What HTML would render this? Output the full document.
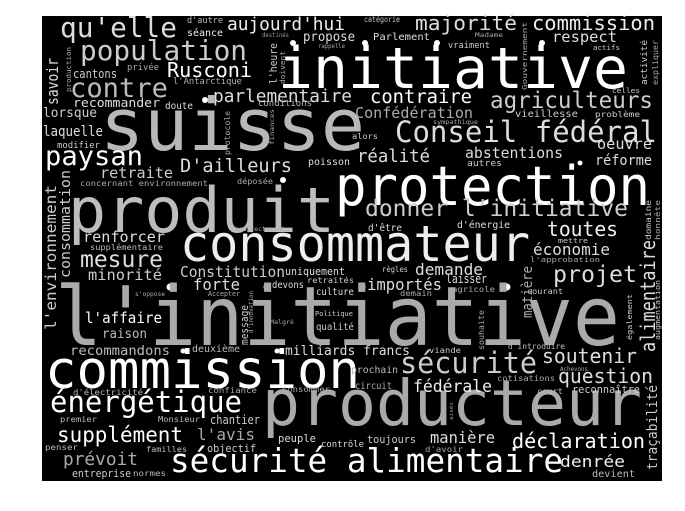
<!DOCTYPE html>
<html><head><meta charset="utf-8"><style>
html,body{margin:0;padding:0;background:#fff;width:685px;height:511px;overflow:hidden}
svg{display:block}
text{font-family:"DejaVu Sans Mono","Liberation Mono",monospace}
</style></head><body>
<svg width="685" height="511" viewBox="0 0 685 511" xmlns="http://www.w3.org/2000/svg">
<rect x="42" y="16" width="620" height="465" fill="#000"/>
<g fill="#fff">
<circle cx="293" cy="43" r="3"/><circle cx="205" cy="100" r="3"/><circle cx="283" cy="180" r="3"/>
<circle cx="365" cy="43" r="3"/><circle cx="437" cy="43" r="3"/><circle cx="542" cy="43" r="3"/>
<circle cx="580" cy="163" r="2.5"/><circle cx="170" cy="287" r="3.5"/><circle cx="267" cy="287" r="3.5"/>
<circle cx="183" cy="351" r="2.5"/><circle cx="277" cy="351" r="2.5"/><circle cx="362" cy="287" r="3.5"/><circle cx="507" cy="287" r="3.5"/>
</g>
<g>
<text x="55" y="345" font-size="82" fill="#aaa" textLength="565" lengthAdjust="spacingAndGlyphs">l'initiative</text>
<text x="68" y="232" font-size="62" fill="#bdbdbd" textLength="267" lengthAdjust="spacingAndGlyphs">produit</text>
<text x="100" y="150" font-size="72" fill="#b8b8b8" textLength="265" lengthAdjust="spacingAndGlyphs">suisse</text>
<text x="278" y="88" font-size="57" fill="#fff" textLength="350" lengthAdjust="spacingAndGlyphs">initiative</text>
<text x="335" y="205" font-size="54" fill="#fff" textLength="315" lengthAdjust="spacingAndGlyphs">protection</text>
<text x="180" y="261" font-size="50" fill="#eee" textLength="350" lengthAdjust="spacingAndGlyphs">consommateur</text>
<text x="45" y="388" font-size="53" fill="#fff" textLength="315" lengthAdjust="spacingAndGlyphs">commission</text>
<text x="262" y="425" font-size="63" fill="#aaa" textLength="380" lengthAdjust="spacingAndGlyphs">producteur</text>
<text x="170" y="472" font-size="33" fill="#fff" textLength="393" lengthAdjust="spacingAndGlyphs">sécurité alimentaire</text>
<text x="60" y="37" font-size="28" fill="#ddd" textLength="117" lengthAdjust="spacingAndGlyphs">qu'elle</text>
<text x="187" y="23" font-size="9" fill="#bbb" textLength="36" lengthAdjust="spacingAndGlyphs">d'autre</text>
<text x="187" y="36" font-size="10" fill="#eee" textLength="36" lengthAdjust="spacingAndGlyphs">séance</text>
<text x="227" y="30" font-size="18" fill="#eee" textLength="118" lengthAdjust="spacingAndGlyphs">aujourd'hui</text>
<text x="262" y="37" font-size="6" fill="#999" textLength="27" lengthAdjust="spacingAndGlyphs">destinés</text>
<text x="303" y="41" font-size="13" fill="#ddd" textLength="52" lengthAdjust="spacingAndGlyphs">propose</text>
<text x="318" y="48" font-size="6" fill="#aaa" textLength="27" lengthAdjust="spacingAndGlyphs">rappelle</text>
<text x="80" y="60" font-size="28" fill="#ccc" textLength="167" lengthAdjust="spacingAndGlyphs">population</text>
<text x="127" y="70" font-size="9" fill="#aaa" textLength="32" lengthAdjust="spacingAndGlyphs">privée</text>
<text x="73" y="78" font-size="12" fill="#ccc" textLength="44" lengthAdjust="spacingAndGlyphs">cantons</text>
<text x="167" y="77" font-size="20" fill="#fff" textLength="85" lengthAdjust="spacingAndGlyphs">Rusconi</text>
<text x="173" y="84" font-size="9" fill="#aaa" textLength="69" lengthAdjust="spacingAndGlyphs">l'Antarctique</text>
<text x="70" y="97" font-size="27" fill="#bbb" textLength="98" lengthAdjust="spacingAndGlyphs">contre</text>
<text x="213" y="102" font-size="18" fill="#ddd" textLength="139" lengthAdjust="spacingAndGlyphs">parlementaire</text>
<text x="73" y="107" font-size="12" fill="#ddd" textLength="87" lengthAdjust="spacingAndGlyphs">recommander</text>
<text x="165" y="109" font-size="10" fill="#ddd" textLength="28" lengthAdjust="spacingAndGlyphs">doute</text>
<text x="258" y="106" font-size="9" fill="#bbb" textLength="54" lengthAdjust="spacingAndGlyphs">conditions</text>
<text x="43" y="117" font-size="13" fill="#ccc" textLength="54" lengthAdjust="spacingAndGlyphs">lorsque</text>
<text x="43" y="136" font-size="14" fill="#ddd" textLength="60" lengthAdjust="spacingAndGlyphs">laquelle</text>
<text x="57" y="148" font-size="9" fill="#ccc" textLength="43" lengthAdjust="spacingAndGlyphs">modifier</text>
<text x="45" y="165" font-size="27" fill="#fff" textLength="98" lengthAdjust="spacingAndGlyphs">paysan</text>
<text x="180" y="172" font-size="19" fill="#ddd" textLength="112" lengthAdjust="spacingAndGlyphs">D'ailleurs</text>
<text x="308" y="165" font-size="10" fill="#ddd" textLength="42" lengthAdjust="spacingAndGlyphs">poisson</text>
<text x="100" y="178" font-size="15" fill="#ccc" textLength="73" lengthAdjust="spacingAndGlyphs">retraite</text>
<text x="80" y="186" font-size="8" fill="#aaa" textLength="128" lengthAdjust="spacingAndGlyphs">concernant environnement</text>
<text x="237" y="184" font-size="8" fill="#aaa" textLength="36" lengthAdjust="spacingAndGlyphs">déposée</text>
<text x="83" y="242" font-size="15" fill="#ddd" textLength="82" lengthAdjust="spacingAndGlyphs">renforcer</text>
<text x="90" y="250" font-size="8" fill="#bbb" textLength="73" lengthAdjust="spacingAndGlyphs">supplémentaire</text>
<text x="235" y="231" font-size="6" fill="#aaa" textLength="50" lengthAdjust="spacingAndGlyphs">indirectement</text>
<text transform="translate(58,105) rotate(-90)" font-size="16" fill="#ddd" textLength="47" lengthAdjust="spacingAndGlyphs">savoir</text>
<text transform="translate(71,92) rotate(-90)" font-size="7" fill="#aaa" textLength="45" lengthAdjust="spacingAndGlyphs">production</text>
<text transform="translate(56,330) rotate(-90)" font-size="15" fill="#ccc" textLength="145" lengthAdjust="spacingAndGlyphs">l'environnement</text>
<text transform="translate(70,278) rotate(-90)" font-size="14" fill="#ccc" textLength="108" lengthAdjust="spacingAndGlyphs">consommation</text>
<text transform="translate(277,84) rotate(-90)" font-size="11" fill="#ccc" textLength="41" lengthAdjust="spacingAndGlyphs">l'heure</text>
<text transform="translate(285,84) rotate(-90)" font-size="7" fill="#aaa" textLength="33" lengthAdjust="spacingAndGlyphs">doivent</text>
<text transform="translate(230,155) rotate(-90)" font-size="8" fill="#aaa" textLength="44" lengthAdjust="spacingAndGlyphs">protocole</text>
<text transform="translate(274,145) rotate(-90)" font-size="6" fill="#aaa" textLength="36" lengthAdjust="spacingAndGlyphs">finances</text>
<text transform="translate(248,345) rotate(-90)" font-size="11" fill="#ccc" textLength="40" lengthAdjust="spacingAndGlyphs">message</text>
<text transform="translate(253,333) rotate(-90)" font-size="6" fill="#aaa" textLength="42" lengthAdjust="spacingAndGlyphs">d'innovation</text>
<text x="80" y="267" font-size="23" fill="#ddd" textLength="83" lengthAdjust="spacingAndGlyphs">mesure</text>
<text x="88" y="280" font-size="15" fill="#ccc" textLength="74" lengthAdjust="spacingAndGlyphs">minorité</text>
<text x="180" y="277" font-size="15" fill="#ccc" textLength="105" lengthAdjust="spacingAndGlyphs">Constitution</text>
<text x="285" y="275" font-size="11" fill="#ddd" textLength="60" lengthAdjust="spacingAndGlyphs">uniquement</text>
<text x="193" y="290" font-size="16" fill="#ddd" textLength="47" lengthAdjust="spacingAndGlyphs">forte</text>
<text x="272" y="288" font-size="10" fill="#ddd" textLength="32" lengthAdjust="spacingAndGlyphs">devons</text>
<text x="307" y="283" font-size="8" fill="#ccc" textLength="47" lengthAdjust="spacingAndGlyphs">retraités</text>
<text x="316" y="295" font-size="10" fill="#ddd" textLength="38" lengthAdjust="spacingAndGlyphs">culture</text>
<text x="135" y="296" font-size="6" fill="#aaa" textLength="30" lengthAdjust="spacingAndGlyphs">s'oppose</text>
<text x="208" y="296" font-size="7" fill="#aaa" textLength="32" lengthAdjust="spacingAndGlyphs">Accepter</text>
<text x="85" y="323" font-size="15" fill="#fff" textLength="77" lengthAdjust="spacingAndGlyphs">l'affaire</text>
<text x="270" y="324" font-size="6" fill="#aaa" textLength="24" lengthAdjust="spacingAndGlyphs">Malgré</text>
<text x="315" y="316" font-size="7" fill="#ccc" textLength="38" lengthAdjust="spacingAndGlyphs">Politique</text>
<text x="316" y="330" font-size="10" fill="#ccc" textLength="38" lengthAdjust="spacingAndGlyphs">qualité</text>
<text x="102" y="338" font-size="13" fill="#bbb" textLength="45" lengthAdjust="spacingAndGlyphs">raison</text>
<text x="70" y="355" font-size="13" fill="#bbb" textLength="100" lengthAdjust="spacingAndGlyphs">recommandons</text>
<text x="192" y="352" font-size="10" fill="#bbb" textLength="48" lengthAdjust="spacingAndGlyphs">deuxième</text>
<text x="285" y="355" font-size="13" fill="#ddd" textLength="125" lengthAdjust="spacingAndGlyphs">milliards francs</text>
<text x="73" y="395" font-size="8" fill="#bbb" textLength="70" lengthAdjust="spacingAndGlyphs">d'électricité</text>
<text x="208" y="393" font-size="8" fill="#aaa" textLength="49" lengthAdjust="spacingAndGlyphs">confiance</text>
<text x="282" y="392" font-size="8" fill="#aaa" textLength="48" lengthAdjust="spacingAndGlyphs">consommer</text>
<text x="50" y="412" font-size="29" fill="#fff" textLength="192" lengthAdjust="spacingAndGlyphs">énergétique</text>
<text x="60" y="422" font-size="8" fill="#bbb" textLength="37" lengthAdjust="spacingAndGlyphs">premier</text>
<text x="158" y="422" font-size="8" fill="#bbb" textLength="42" lengthAdjust="spacingAndGlyphs">Monsieur</text>
<text x="210" y="424" font-size="12" fill="#ccc" textLength="50" lengthAdjust="spacingAndGlyphs">chantier</text>
<text x="57" y="442" font-size="21" fill="#fff" textLength="126" lengthAdjust="spacingAndGlyphs">supplément</text>
<text x="197" y="440" font-size="16" fill="#aaa" textLength="58" lengthAdjust="spacingAndGlyphs">l'avis</text>
<text x="45" y="450" font-size="8" fill="#bbb" textLength="33" lengthAdjust="spacingAndGlyphs">penser</text>
<text x="146" y="452" font-size="8" fill="#bbb" textLength="41" lengthAdjust="spacingAndGlyphs">familles</text>
<text x="207" y="452" font-size="11" fill="#ccc" textLength="49" lengthAdjust="spacingAndGlyphs">objectif</text>
<text x="278" y="442" font-size="11" fill="#ddd" textLength="38" lengthAdjust="spacingAndGlyphs">peuple</text>
<text x="321" y="447" font-size="9" fill="#ddd" textLength="43" lengthAdjust="spacingAndGlyphs">contrôle</text>
<text x="63" y="465" font-size="18" fill="#aaa" textLength="75" lengthAdjust="spacingAndGlyphs">prévoit</text>
<text x="72" y="477" font-size="11" fill="#ccc" textLength="59" lengthAdjust="spacingAndGlyphs">entreprise</text>
<text x="133" y="476" font-size="8" fill="#bbb" textLength="33" lengthAdjust="spacingAndGlyphs">normes</text>
<text x="364" y="22" font-size="8" fill="#ccc" textLength="36" lengthAdjust="spacingAndGlyphs">catégorie</text>
<text x="415" y="30" font-size="20" fill="#ddd" textLength="102" lengthAdjust="spacingAndGlyphs">majorité</text>
<text x="532" y="30" font-size="20" fill="#eee" textLength="123" lengthAdjust="spacingAndGlyphs">commission</text>
<text x="373" y="40" font-size="10" fill="#ddd" textLength="57" lengthAdjust="spacingAndGlyphs">Parlement</text>
<text x="475" y="37" font-size="6" fill="#aaa" textLength="28" lengthAdjust="spacingAndGlyphs">Madame</text>
<text x="552" y="42" font-size="15" fill="#ddd" textLength="65" lengthAdjust="spacingAndGlyphs">respect</text>
<text x="448" y="48" font-size="9" fill="#ccc" textLength="42" lengthAdjust="spacingAndGlyphs">vraiment</text>
<text x="593" y="50" font-size="7" fill="#ccc" textLength="27" lengthAdjust="spacingAndGlyphs">actifs</text>
<text transform="translate(527,90) rotate(-90)" font-size="7" fill="#aaa" textLength="68" lengthAdjust="spacingAndGlyphs">Gouvernement</text>
<text transform="translate(647,85) rotate(-90)" font-size="9" fill="#ccc" textLength="45" lengthAdjust="spacingAndGlyphs">activité</text>
<text transform="translate(658,85) rotate(-90)" font-size="8" fill="#aaa" textLength="45" lengthAdjust="spacingAndGlyphs">expliquer</text>
<text x="370" y="103" font-size="19" fill="#fff" textLength="102" lengthAdjust="spacingAndGlyphs">contraire</text>
<text x="490" y="108" font-size="23" fill="#ccc" textLength="163" lengthAdjust="spacingAndGlyphs">agriculteurs</text>
<text x="355" y="118" font-size="15" fill="#aaa" textLength="118" lengthAdjust="spacingAndGlyphs">Confédération</text>
<text x="515" y="117" font-size="10" fill="#ccc" textLength="63" lengthAdjust="spacingAndGlyphs">vieillesse</text>
<text x="595" y="117" font-size="8" fill="#ccc" textLength="45" lengthAdjust="spacingAndGlyphs">problème</text>
<text x="612" y="93" font-size="7" fill="#ccc" textLength="28" lengthAdjust="spacingAndGlyphs">celles</text>
<text x="433" y="124" font-size="6" fill="#aaa" textLength="45" lengthAdjust="spacingAndGlyphs">sympathique</text>
<text x="395" y="142" font-size="29" fill="#ddd" textLength="262" lengthAdjust="spacingAndGlyphs">Conseil fédéral</text>
<text x="352" y="139" font-size="8" fill="#ccc" textLength="26" lengthAdjust="spacingAndGlyphs">alors</text>
<text x="357" y="162" font-size="18" fill="#ddd" textLength="73" lengthAdjust="spacingAndGlyphs">réalité</text>
<text x="465" y="158" font-size="15" fill="#ddd" textLength="98" lengthAdjust="spacingAndGlyphs">abstentions</text>
<text x="597" y="149" font-size="15" fill="#ddd" textLength="55" lengthAdjust="spacingAndGlyphs">oeuvre</text>
<text x="595" y="165" font-size="14" fill="#ddd" textLength="57" lengthAdjust="spacingAndGlyphs">réforme</text>
<text x="467" y="166" font-size="9" fill="#ccc" textLength="35" lengthAdjust="spacingAndGlyphs">autres</text>
<text x="365" y="216" font-size="23" fill="#ccc" textLength="263" lengthAdjust="spacingAndGlyphs">donner l'initiative</text>
<text x="368" y="231" font-size="10" fill="#ddd" textLength="34" lengthAdjust="spacingAndGlyphs">d'être</text>
<text x="457" y="228" font-size="10" fill="#ddd" textLength="53" lengthAdjust="spacingAndGlyphs">d'énergie</text>
<text x="547" y="236" font-size="20" fill="#eee" textLength="71" lengthAdjust="spacingAndGlyphs">toutes</text>
<text x="558" y="243" font-size="7" fill="#ccc" textLength="30" lengthAdjust="spacingAndGlyphs">mettre</text>
<text transform="translate(651,240) rotate(-90)" font-size="8" fill="#ccc" textLength="40" lengthAdjust="spacingAndGlyphs">domaine</text>
<text transform="translate(660,240) rotate(-90)" font-size="7" fill="#aaa" textLength="40" lengthAdjust="spacingAndGlyphs">honnête</text>
<text x="533" y="255" font-size="16" fill="#ddd" textLength="77" lengthAdjust="spacingAndGlyphs">économie</text>
<text x="530" y="262" font-size="7" fill="#aaa" textLength="70" lengthAdjust="spacingAndGlyphs">l'approbation</text>
<text x="382" y="272" font-size="8" fill="#ccc" textLength="26" lengthAdjust="spacingAndGlyphs">règles</text>
<text x="415" y="275" font-size="16" fill="#ddd" textLength="68" lengthAdjust="spacingAndGlyphs">demande</text>
<text x="553" y="282" font-size="23" fill="#ddd" textLength="84" lengthAdjust="spacingAndGlyphs">projet</text>
<text x="367" y="290" font-size="16" fill="#ddd" textLength="75" lengthAdjust="spacingAndGlyphs">importés</text>
<text x="446" y="283" font-size="12" fill="#ddd" textLength="41" lengthAdjust="spacingAndGlyphs">laisser</text>
<text x="452" y="292" font-size="8" fill="#aaa" textLength="43" lengthAdjust="spacingAndGlyphs">agricole</text>
<text x="400" y="296" font-size="8" fill="#aaa" textLength="32" lengthAdjust="spacingAndGlyphs">demain</text>
<text x="527" y="294" font-size="8" fill="#ccc" textLength="36" lengthAdjust="spacingAndGlyphs">courant</text>
<text transform="translate(532,318) rotate(-90)" font-size="14" fill="#aaa" textLength="52" lengthAdjust="spacingAndGlyphs">matière</text>
<text transform="translate(655,352) rotate(-90)" font-size="20" fill="#ddd" textLength="112" lengthAdjust="spacingAndGlyphs">alimentaire</text>
<text transform="translate(632,340) rotate(-90)" font-size="7" fill="#ccc" textLength="46" lengthAdjust="spacingAndGlyphs">également</text>
<text transform="translate(660,340) rotate(-90)" font-size="7" fill="#ccc" textLength="60" lengthAdjust="spacingAndGlyphs">augmentation</text>
<text transform="translate(484,350) rotate(-90)" font-size="8" fill="#aaa" textLength="40" lengthAdjust="spacingAndGlyphs">souhaite</text>
<text x="508" y="349" font-size="8" fill="#bbb" textLength="57" lengthAdjust="spacingAndGlyphs">d'introduire</text>
<text x="429" y="353" font-size="8" fill="#ccc" textLength="32" lengthAdjust="spacingAndGlyphs">viande</text>
<text x="400" y="373" font-size="29" fill="#ccc" textLength="137" lengthAdjust="spacingAndGlyphs">sécurité</text>
<text x="542" y="363" font-size="20" fill="#ddd" textLength="95" lengthAdjust="spacingAndGlyphs">soutenir</text>
<text x="351" y="373" font-size="10" fill="#bbb" textLength="47" lengthAdjust="spacingAndGlyphs">prochain</text>
<text x="560" y="371" font-size="6" fill="#aaa" textLength="28" lengthAdjust="spacingAndGlyphs">Achevons</text>
<text x="355" y="389" font-size="10" fill="#aaa" textLength="37" lengthAdjust="spacingAndGlyphs">circuit</text>
<text x="413" y="392" font-size="17" fill="#eee" textLength="79" lengthAdjust="spacingAndGlyphs">fédérale</text>
<text x="497" y="381" font-size="8" fill="#aaa" textLength="58" lengthAdjust="spacingAndGlyphs">cotisations</text>
<text x="558" y="383" font-size="20" fill="#ddd" textLength="95" lengthAdjust="spacingAndGlyphs">question</text>
<text x="537" y="394" font-size="8" fill="#bbb" textLength="26" lengthAdjust="spacingAndGlyphs">court</text>
<text x="572" y="393" font-size="11" fill="#ccc" textLength="68" lengthAdjust="spacingAndGlyphs">reconnaître</text>
<text transform="translate(657,470) rotate(-90)" font-size="14" fill="#ccc" textLength="85" lengthAdjust="spacingAndGlyphs">traçabilité</text>
<text transform="translate(453,420) rotate(-90)" font-size="5" fill="#999" textLength="18" lengthAdjust="spacingAndGlyphs">aisés</text>
<text x="367" y="443" font-size="11" fill="#ccc" textLength="49" lengthAdjust="spacingAndGlyphs">toujours</text>
<text x="430" y="443" font-size="16" fill="#ddd" textLength="65" lengthAdjust="spacingAndGlyphs">manière</text>
<text x="425" y="452" font-size="8" fill="#aaa" textLength="38" lengthAdjust="spacingAndGlyphs">d'avoir</text>
<text x="512" y="448" font-size="20" fill="#fff" textLength="133" lengthAdjust="spacingAndGlyphs">déclaration</text>
<text x="560" y="467" font-size="16" fill="#eee" textLength="65" lengthAdjust="spacingAndGlyphs">denrée</text>
<text x="592" y="477" font-size="10" fill="#bbb" textLength="43" lengthAdjust="spacingAndGlyphs">devient</text>
</g>
</svg>
</body></html>
